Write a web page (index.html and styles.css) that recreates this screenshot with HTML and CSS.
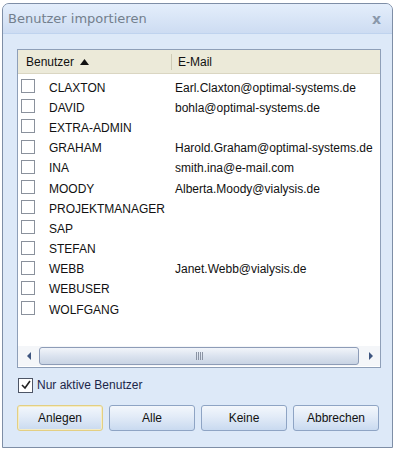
FILE: index.html
```html
<!DOCTYPE html>
<html lang="de">
<head>
    <meta charset="UTF-8">
    <title>Benutzer importieren</title>
    <link rel="stylesheet" href="styles.css">
</head>
<body>
    <div class="dialog">
        <div class="titlebar">
            <span class="title">Benutzer importieren</span>
            <span class="close">x</span>
        </div>

        <div class="content">
            <div class="listbox">
                <div class="list-head">
                    <div class="col-user">Benutzer
                        <svg class="sort" width="9" height="6" viewBox="0 0 9 6"><path d="M0 6 L4.5 0 L9 6 Z" fill="#111"/></svg>
                    </div>
                    <div class="col-mail">E-Mail</div>
                </div>

                <div class="rows">
                    <div class="row"><span class="box"></span><span class="name">CLAXTON</span><span class="mail">Earl.Claxton@optimal-systems.de</span></div>
                    <div class="row"><span class="box"></span><span class="name">DAVID</span><span class="mail">bohla@optimal-systems.de</span></div>
                    <div class="row"><span class="box"></span><span class="name">EXTRA-ADMIN</span><span class="mail"></span></div>
                    <div class="row"><span class="box"></span><span class="name">GRAHAM</span><span class="mail">Harold.Graham@optimal-systems.de</span></div>
                    <div class="row"><span class="box"></span><span class="name">INA</span><span class="mail">smith.ina@e-mail.com</span></div>
                    <div class="row"><span class="box"></span><span class="name">MOODY</span><span class="mail">Alberta.Moody@vialysis.de</span></div>
                    <div class="row"><span class="box"></span><span class="name">PROJEKTMANAGER</span><span class="mail"></span></div>
                    <div class="row"><span class="box"></span><span class="name">SAP</span><span class="mail"></span></div>
                    <div class="row"><span class="box"></span><span class="name">STEFAN</span><span class="mail"></span></div>
                    <div class="row"><span class="box"></span><span class="name">WEBB</span><span class="mail">Janet.Webb@vialysis.de</span></div>
                    <div class="row"><span class="box"></span><span class="name">WEBUSER</span><span class="mail"></span></div>
                    <div class="row"><span class="box"></span><span class="name">WOLFGANG</span><span class="mail"></span></div>
                </div>

                <div class="hscroll">
                    <div class="arrow arrow-left"></div>
                    <div class="thumb"><span class="grip"></span></div>
                    <div class="arrow arrow-right"></div>
                </div>
            </div>

            <label class="only-active">
                <span class="check">
                    <svg width="12" height="12" viewBox="0 0 12 12"><path d="M2 6 L5 9 L10 2" fill="none" stroke="#222" stroke-width="1.6"/></svg>
                </span>
                Nur aktive Benutzer
            </label>

            <div class="buttons">
                <button class="btn btn-default">Anlegen</button>
                <button class="btn">Alle</button>
                <button class="btn">Keine</button>
                <button class="btn">Abbrechen</button>
            </div>
        </div>
    </div>
</body>
</html>
```

FILE: styles.css
```css
body {
    margin: 0;
    background: #fff;
    font-family: "Liberation Sans", Arial, sans-serif;
    font-size: 12px;
    color: #111;
}
.dialog {
    margin: 3px 0 0 2px;
    width: 389px;
    height: 443px;
    border: 1px solid #7e8ea6;
    border-radius: 7px 7px 0 0;
    background: #dde9f8;
    display: flex;
    flex-direction: column;
}
.titlebar {
    height: 29px;
    display: flex;
    align-items: center;
    justify-content: space-between;
    padding: 0 11px 0 5px;
    background: linear-gradient(#e4eefb, #cddcf2);
    border-bottom: 1px solid #bfd3ee;
    border-radius: 6px 6px 0 0;
}
.title {
    font-family: "DejaVu Sans", sans-serif;
    font-size: 13px;
    color: #737f8d;
}
.close {
    font-family: "DejaVu Sans", sans-serif;
    font-weight: bold;
    font-size: 14px;
    color: #8a98ab;
}
.content {
    padding: 15px 11px 0 14px;
}
.listbox {
    height: 317px;
    border: 1px solid #8e9fb8;
    background: #fff;
    display: flex;
    flex-direction: column;
}
.list-head {
    height: 23px;
    display: flex;
    align-items: center;
    background: #ecead9;
    border-bottom: 1px solid #dad6c2;
}
.col-user {
    width: 145px;
    padding-left: 8px;
    border-right: 1px solid #cfcbb6;
    line-height: 16px;
}
.sort {
    margin-left: 3px;
    vertical-align: 1px;
}
.col-mail {
    padding-left: 6px;
}
.rows {
    flex: 1;
    padding-top: 2px;
}
.row {
    height: 20.2px;
    display: flex;
    align-items: center;
    padding-left: 3px;
}
.box {
    width: 12px;
    height: 12px;
    border: 1px solid #8a919c;
    background: #fff;
    flex: none;
}
.name {
    width: 126px;
    margin-left: 14px;
    padding-top: 3px;
}
.mail {
    padding-top: 3px;
}
.hscroll {
    height: 20px;
    display: flex;
    align-items: center;
    background: #f4f6f9;
    margin-bottom: 1px;
}
.arrow {
    width: 21px;
    height: 18px;
    position: relative;
    flex: none;
}
.arrow-left::after,
.arrow-right::after {
    content: "";
    position: absolute;
    top: 5px;
    border-top: 4px solid transparent;
    border-bottom: 4px solid transparent;
}
.arrow-left::after {
    left: 9px;
    border-right: 4px solid #3f5680;
}
.arrow-right::after {
    left: 10px;
    border-left: 4px solid #3f5680;
}
.thumb {
    flex: 1;
    height: 16px;
    border: 1px solid #8d9cb7;
    border-radius: 3px;
    background: linear-gradient(#f2f5fa, #dbe3ef 50%, #c9d4e4);
    display: flex;
    align-items: center;
    justify-content: center;
}
.grip {
    width: 7px;
    height: 8px;
    background: repeating-linear-gradient(90deg, #8a93a3 0 1px, transparent 1px 2px);
}
.only-active {
    display: flex;
    align-items: center;
    margin: 9px 0 0 1px;
    color: #1c2648;
    height: 16px;
}
.check {
    width: 13px;
    height: 13px;
    border: 1px solid #4d5566;
    background: #fff;
    margin-right: 4px;
    display: flex;
    align-items: center;
    justify-content: center;
}
.buttons {
    display: flex;
    gap: 6px;
    margin-top: 12px;
    width: 362px;
}
.btn {
    flex: 1;
    height: 26px;
    font-family: "Liberation Sans", Arial, sans-serif;
    font-size: 12px;
    color: #111;
    border: 1px solid #8ea4c4;
    border-radius: 3px;
    background: linear-gradient(#f3f7fc, #e2ebf7 45%, #c9daf0);
    padding: 0;
}
.btn-default {
    border-color: #e3cf83;
    box-shadow: inset 0 0 0 1px #f4ecc5;
}
```
